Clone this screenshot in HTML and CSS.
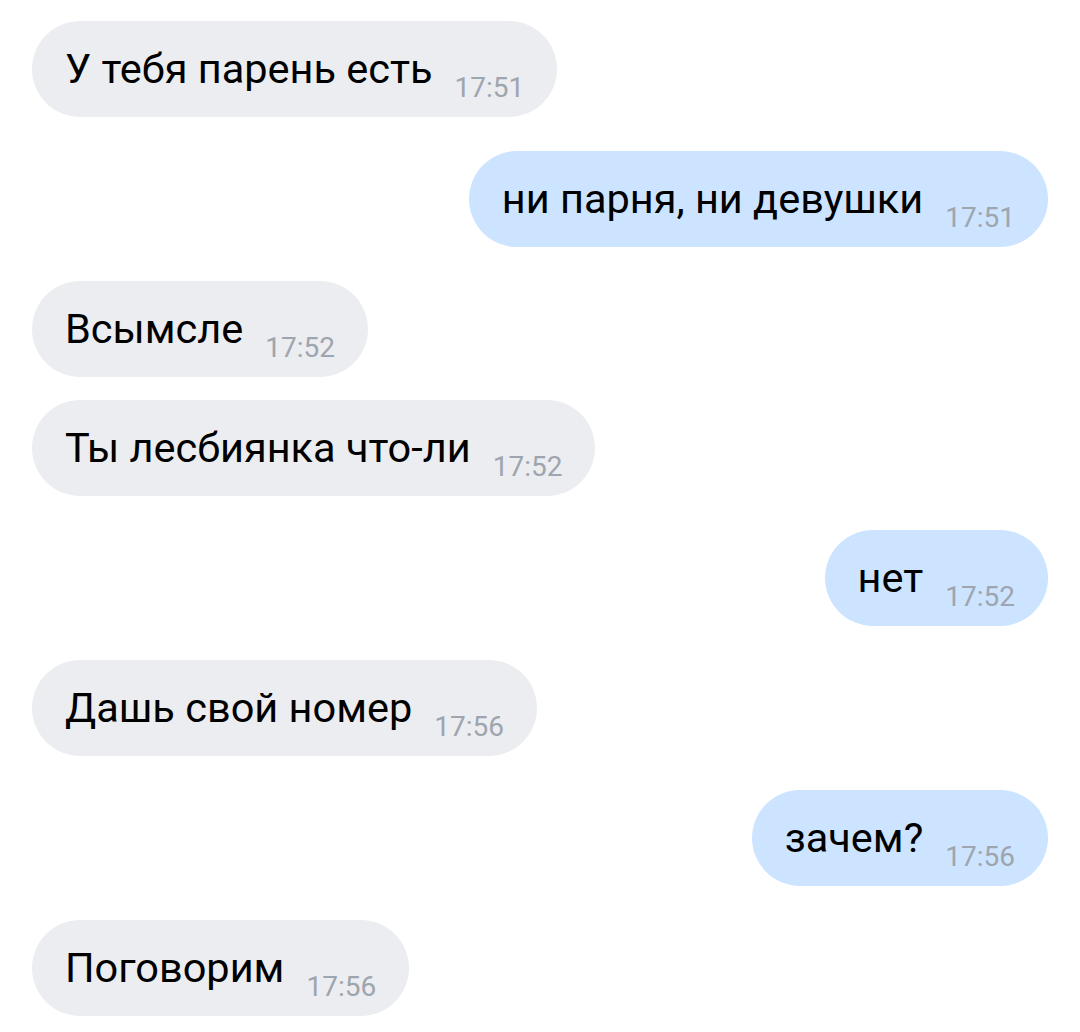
FILE: index.html
```html
<!DOCTYPE html>
<html lang="ru">
<head>
    <meta charset="UTF-8">
    <meta name="viewport" content="width=device-width, initial-scale=1.0">
    <title>Чат</title>
    <link rel="stylesheet" href="styles.css">
</head>
<body>
    <div class="chat">
        <div class="msg in"><span class="text">У тебя парень есть</span><span class="time">17:51</span></div>
        <div class="msg out"><span class="text">ни парня, ни девушки</span><span class="time">17:51</span></div>
        <div class="msg in"><span class="text">Всымсле</span><span class="time">17:52</span></div>
        <div class="msg in same"><span class="text">Ты лесбиянка что-ли</span><span class="time">17:52</span></div>
        <div class="msg out"><span class="text">нет</span><span class="time">17:52</span></div>
        <div class="msg in"><span class="text">Дашь свой номер</span><span class="time">17:56</span></div>
        <div class="msg out"><span class="text">зачем?</span><span class="time">17:56</span></div>
        <div class="msg in"><span class="text">Поговорим</span><span class="time">17:56</span></div>
    </div>
</body>
</html>
```

FILE: styles.css
```css
body {
    margin: 0;
    background: #fff;
    font-family: Roboto, "Noto Sans", sans-serif;
}
.chat {
    display: flex;
    flex-direction: column;
    padding: 21px 32px;
}
.msg {
    box-sizing: border-box;
    height: 96px;
    margin-top: 34px;
    padding: 0 33px 0 33px;
    border-radius: 48px;
    font-size: 41.5px;
    line-height: 96px;
    white-space: nowrap;
    color: #000;
}
.msg:first-child {
    margin-top: 0;
}
.msg.same {
    margin-top: 23px;
}
.msg.in {
    align-self: flex-start;
    background: #ebedf0;
}
.msg.out {
    align-self: flex-end;
    background: #cce4ff;
}
.time {
    margin-left: 22px;
    font-size: 28px;
    color: #9ea5ae;
    vertical-align: -14px;
}
```
